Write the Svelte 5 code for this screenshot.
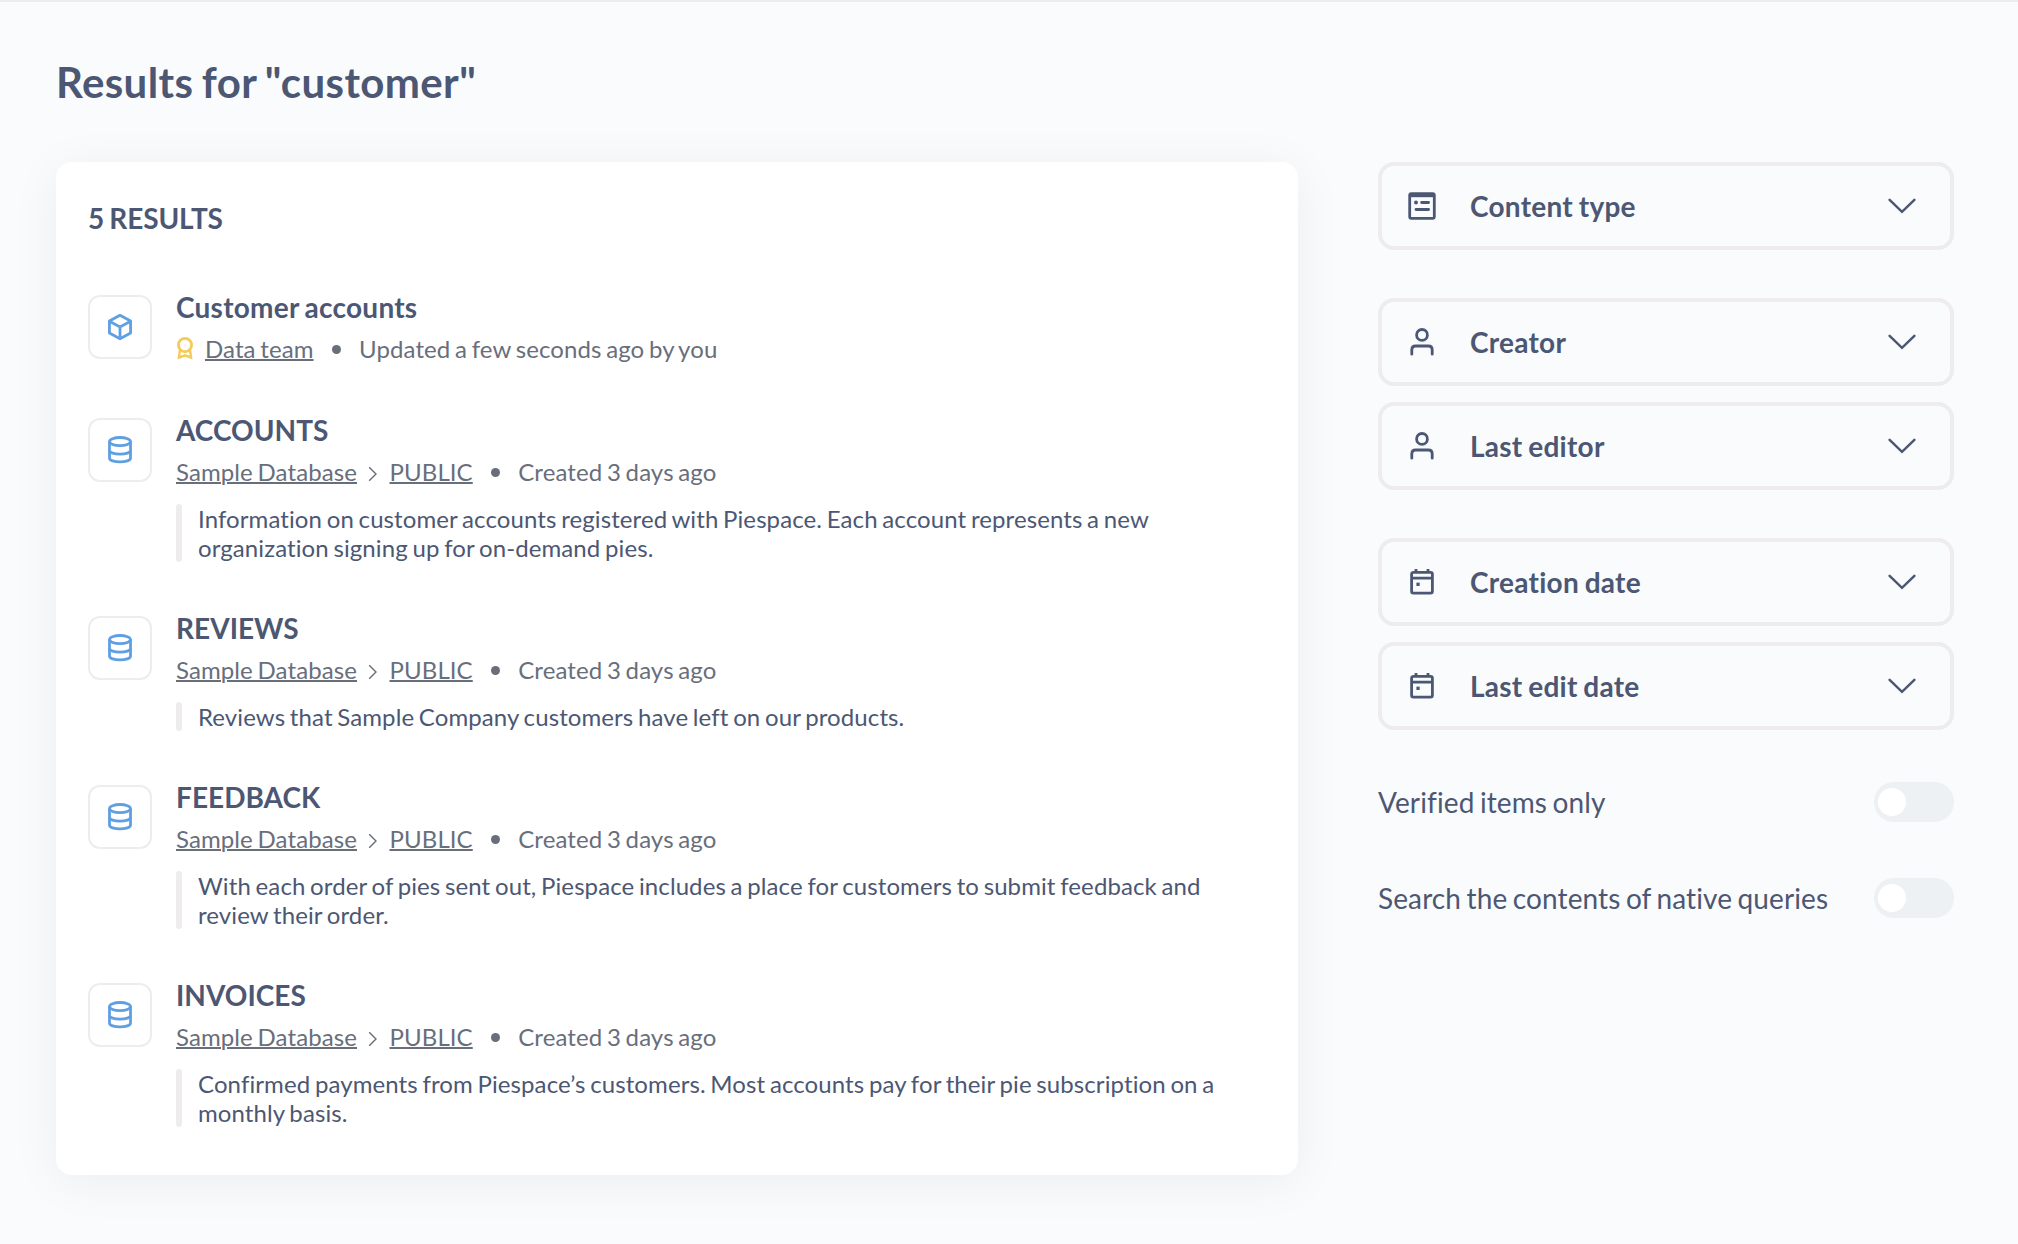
<script>
  const path = [{ label: 'Sample Database' }, { label: 'PUBLIC' }];

  const results = [
    {
      name: 'Customer accounts',
      icon: 'model',
      official: true,
      path: [{ label: 'Data team' }],
      status: 'Updated a few seconds ago by you',
    },
    {
      name: 'ACCOUNTS',
      icon: 'table',
      path,
      status: 'Created 3 days ago',
      description:
        'Information on customer accounts registered with Piespace. Each account represents a new organization signing up for on-demand pies.',
    },
    {
      name: 'REVIEWS',
      icon: 'table',
      path,
      status: 'Created 3 days ago',
      description: 'Reviews that Sample Company customers have left on our products.',
    },
    {
      name: 'FEEDBACK',
      icon: 'table',
      path,
      status: 'Created 3 days ago',
      description:
        'With each order of pies sent out, Piespace includes a place for customers to submit feedback and review their order.',
    },
    {
      name: 'INVOICES',
      icon: 'table',
      path,
      status: 'Created 3 days ago',
      description:
        'Confirmed payments from Piespace’s customers. Most accounts pay for their pie subscription on a monthly basis.',
    },
  ];

  const filterGroups = [
    [{ label: 'Content type', icon: 'dashboard' }],
    [
      { label: 'Creator', icon: 'person' },
      { label: 'Last editor', icon: 'person' },
    ],
    [
      { label: 'Creation date', icon: 'calendar' },
      { label: 'Last edit date', icon: 'calendar' },
    ],
  ];

  let toggles = $state([
    { label: 'Verified items only', on: false },
    { label: 'Search the contents of native queries', on: false },
  ]);
</script>

<div class="page">
  <h1>Results for "customer"</h1>
  <div class="columns">
    <main class="card">
      <h2>5 RESULTS</h2>
      <ul class="results">
        {#each results as item}
          <li class="result">
            <div class="tile">
              {#if item.icon === 'model'}
                <svg width="32" height="32" viewBox="0 0 32 32" fill="none" stroke="currentColor" stroke-width="2.8">
                  <path d="M16 4.2 26.6 10v12L16 27.8 5.4 22V10z" stroke-linejoin="round" />
                  <path d="M5.8 10.4 16 16l10.2-5.6M16 16v11" />
                </svg>
              {:else}
                <svg width="32" height="32" viewBox="0 0 32 32" fill="none" stroke="currentColor" stroke-width="2.8">
                  <ellipse cx="16" cy="7.6" rx="10.5" ry="4.1" />
                  <path d="M5.5 7.6v16.6c0 2.1 4.6 3.7 10.5 3.7s10.5-1.6 10.5-3.7V7.6" />
                  <path d="M5.5 16.5c0 2.1 4.6 3.7 10.5 3.7s10.5-1.6 10.5-3.7" />
                </svg>
              {/if}
            </div>
            <div class="body">
              <h3 class:caps={item.icon === 'table'}>{item.name}</h3>
              <div class="meta">
                {#if item.official}
                  <svg class="badge" width="18" height="24" viewBox="0 0 18 24" fill="none" stroke="currentColor" stroke-width="2.8">
                    <circle cx="9" cy="9" r="6.6" />
                    <path d="M4 14 2.9 21.6 9 19.4l6.1 2.2L14 14" stroke-width="2.4" />
                  </svg>
                {/if}
                {#each item.path as part, i}
                  {#if i > 0}
                    <svg class="sep" width="10" height="16" viewBox="0 0 10 16" fill="none" stroke="currentColor" stroke-width="1.4">
                      <path d="m1.2 1.2 6.8 6.8-6.8 6.8" />
                    </svg>
                  {/if}
                  <span class="link">{part.label}</span>
                {/each}
                <span class="dot"></span>
                <span>{item.status}</span>
              </div>
              {#if item.description}
                <div class="description">
                  <span class="bar"></span>
                  <p>{item.description}</p>
                </div>
              {/if}
            </div>
          </li>
        {/each}
      </ul>
    </main>

    <aside>
      {#each filterGroups as group}
        <div class="group">
          {#each group as filter}
            <button class="filter" type="button">
              <svg width="32" height="32" viewBox="0 0 32 32" fill="none" stroke="currentColor" stroke-width="2.8">
                {#if filter.icon === 'dashboard'}
                  <rect x="3.7" y="3.7" width="24.6" height="24.6" rx="1.6" />
                  <path d="M3.7 5.2h24.6" stroke-width="4" />
                  <circle cx="10" cy="12.5" r="2" fill="currentColor" stroke="none" />
                  <path d="M15.6 12.5h7M10 19.5h12.6" stroke-linecap="round" />
                {:else if filter.icon === 'person'}
                  <circle cx="16" cy="8.9" r="5.4" />
                  <path d="M5.8 28.2v-4.4c0-2.3 1.5-3.8 3.8-3.8h12.8c2.3 0 3.8 1.5 3.8 3.8v4.4" stroke-linecap="round" />
                {:else}
                  <rect x="5.6" y="6.3" width="20.8" height="20.8" rx="1.8" />
                  <path d="M5.6 12.2h20.8M10 3v3M22 3v3" />
                  <path d="M10.4 18.3h3.3" stroke-width="3.3" />
                {/if}
              </svg>
              <span class="filter-label">{filter.label}</span>
              <svg width="32" height="32" viewBox="0 0 32 32" fill="none" stroke="currentColor" stroke-width="2.5">
                <path d="m3.6 9.8 12.4 12 12.4-12" stroke-linecap="round" />
              </svg>
            </button>
          {/each}
        </div>
      {/each}
      <div class="toggles">
        {#each toggles as toggle}
          <div class="toggle-row">
            <span>{toggle.label}</span>
            <button
              class="switch"
              class:on={toggle.on}
              type="button"
              role="switch"
              aria-checked={toggle.on}
              aria-label={toggle.label}
              onclick={() => (toggle.on = !toggle.on)}
            >
              <span class="thumb"></span>
            </button>
          </div>
        {/each}
      </div>
    </aside>
  </div>
</div>

<style>
  :global(body) {
    background: #f9fbfd;
  }
  .page {
    box-sizing: border-box;
    min-height: 1244px;
    padding: 55px 64px 0 56px;
    border-top: 2px solid #eeecec;
    font-family: Lato, 'Liberation Sans', sans-serif;
    color: #4c5773;
  }
  h1,
  h2,
  h3,
  p,
  ul {
    margin: 0;
    padding: 0;
  }
  h1 {
    font-size: 42px;
    line-height: 50px;
    letter-spacing: 0.009em;
    word-spacing: -0.05em;
  }
  .columns {
    display: flex;
    align-items: flex-start;
    justify-content: space-between;
    margin-top: 55px;
  }
  .card {
    box-sizing: border-box;
    width: 1242px;
    padding: 39px 32px 48px;
    border-radius: 16px;
    background: #fff;
    box-shadow: 0 7px 50px rgba(0, 0, 0, 0.06);
  }
  h2 {
    font-size: 28px;
    line-height: 34px;
    letter-spacing: -0.005em;
    word-spacing: -0.05em;
  }
  .results {
    display: flex;
    flex-direction: column;
    gap: 49px;
    margin-top: 55px;
    list-style: none;
  }
  .result {
    display: flex;
    gap: 24px;
  }
  .tile {
    display: flex;
    flex: none;
    align-items: center;
    justify-content: center;
    box-sizing: border-box;
    width: 64px;
    height: 64px;
    margin-top: 5px;
    border: 2px solid #eeecec;
    border-radius: 12px;
    color: #609fe2;
  }
  .body {
    flex: 1;
    font-size: 24px;
    line-height: 29px;
    letter-spacing: 0.004em;
    word-spacing: -0.065em;
  }
  h3 {
    font-size: 28px;
    line-height: 34px;
    letter-spacing: 0.0085em;
    word-spacing: -0.05em;
  }
  .caps {
    letter-spacing: 0.001em;
  }
  .meta {
    display: flex;
    align-items: center;
    height: 29px;
    margin-top: 10px;
    padding-bottom: 1px;
    color: #696e7b;
  }
  .badge {
    margin: -2px 11px 0 0;
    color: #f3cc58;
  }
  .sep {
    margin: 5px 11.5px 0 11px;
  }
  .link {
    text-decoration: underline;
    text-decoration-thickness: 2px;
  }
  .dot {
    width: 9px;
    height: 9px;
    margin: 2px 18px 0 18.5px;
    border-radius: 50%;
    background: #696e7b;
  }
  .description {
    display: flex;
    gap: 16px;
    margin-top: 17px;
  }
  .bar {
    flex: none;
    width: 6px;
    border-radius: 3px;
    background: #eeecec;
  }
  p {
    width: 1030px;
  }
  aside {
    display: flex;
    flex-direction: column;
    gap: 48px;
    width: 576px;
  }
  .group {
    display: flex;
    flex-direction: column;
    gap: 16px;
  }
  button {
    font: inherit;
    color: inherit;
    cursor: pointer;
  }
  .filter {
    display: flex;
    align-items: center;
    box-sizing: border-box;
    height: 88px;
    padding: 0 32px 0 24px;
    border: 4px solid #eeecec;
    border-radius: 16px;
    background: transparent;
    font-size: 28px;
    font-weight: 700;
    text-align: left;
    letter-spacing: 0.0095em;
    word-spacing: -0.05em;
  }
  .filter-label {
    flex: 1;
    margin-left: 32px;
  }
  .toggles {
    display: flex;
    flex-direction: column;
    gap: 56px;
    margin-top: 4px;
  }
  .toggle-row {
    display: flex;
    align-items: center;
    justify-content: space-between;
    height: 40px;
    font-size: 28px;
    letter-spacing: 0.004em;
    word-spacing: -0.065em;
  }
  .switch {
    display: flex;
    align-items: center;
    width: 80px;
    height: 40px;
    padding: 0 4px;
    border: 0;
    border-radius: 20px;
    background: #edf1f4;
  }
  .switch.on {
    justify-content: flex-end;
    background: #509ee3;
  }
  .thumb {
    width: 28px;
    height: 28px;
    border-radius: 50%;
    background: #fff;
  }
</style>
